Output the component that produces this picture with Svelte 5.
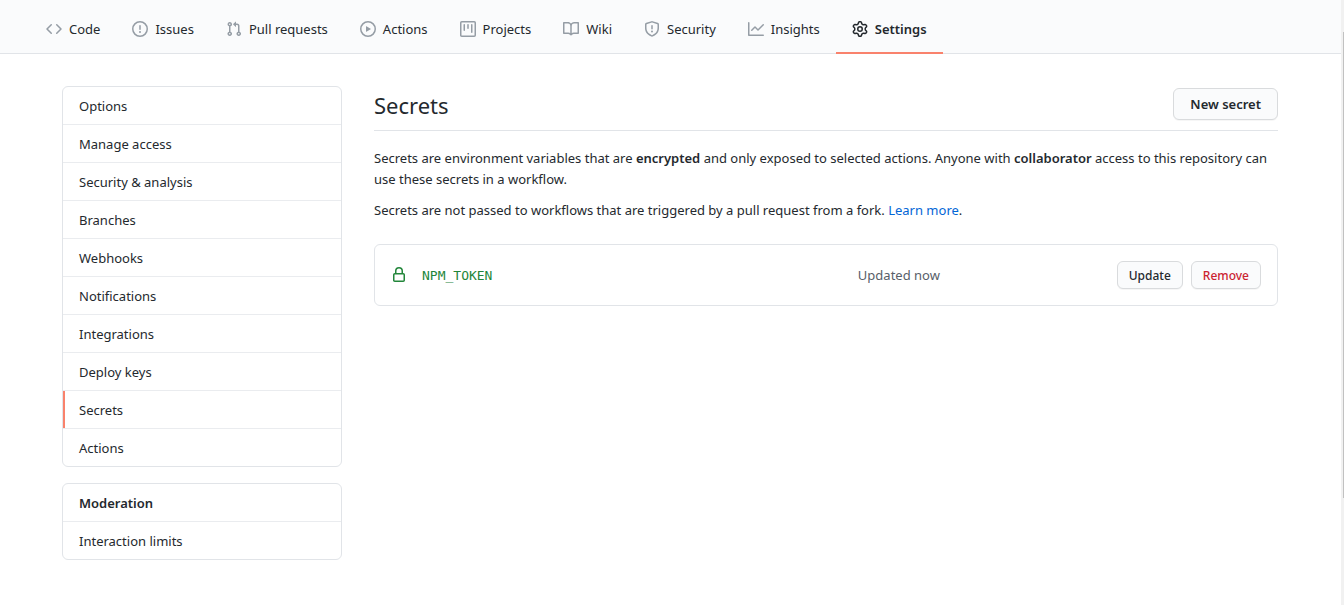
<script>
  const tabs = [
    { label: 'Code', icon: 'M4.72 3.22a.75.75 0 011.06 1.06L2.06 8l3.72 3.72a.75.75 0 11-1.06 1.06L.47 8.53a.75.75 0 010-1.06l4.25-4.25zm6.56 0a.75.75 0 10-1.06 1.06L13.94 8l-3.72 3.72a.75.75 0 101.06 1.06l4.25-4.25a.75.75 0 000-1.06l-4.25-4.25z' },
    { label: 'Issues', icon: 'M8 1.5a6.5 6.5 0 100 13 6.5 6.5 0 000-13zM0 8a8 8 0 1116 0A8 8 0 010 8zm9 3a1 1 0 11-2 0 1 1 0 012 0zm-.25-6.25a.75.75 0 00-1.5 0v3.5a.75.75 0 001.5 0v-3.5z' },
    { label: 'Pull requests', icon: 'M7.177 3.073L9.573.677A.25.25 0 0110 .854v4.792a.25.25 0 01-.427.177L7.177 3.427a.25.25 0 010-.354zM3.75 2.5a.75.75 0 100 1.5.75.75 0 000-1.5zm-2.25.75a2.25 2.25 0 113 2.122v5.256a2.251 2.251 0 11-1.5 0V5.372A2.25 2.25 0 011.5 3.25zM11 2.5h-1V4h1a1 1 0 011 1v5.628a2.251 2.251 0 101.5 0V5A2.5 2.5 0 0011 2.5zm1 10.25a.75.75 0 111.5 0 .75.75 0 01-1.5 0zM3.75 12a.75.75 0 100 1.5.75.75 0 000-1.5z' },
    { label: 'Actions', icon: 'M1.5 8a6.5 6.5 0 1113 0 6.5 6.5 0 01-13 0zM8 0a8 8 0 100 16A8 8 0 008 0zM6.379 5.227A.25.25 0 006 5.442v5.117a.25.25 0 00.379.214l4.264-2.559a.25.25 0 000-.428L6.379 5.227z' },
    { label: 'Projects', icon: 'M1.75 0A1.75 1.75 0 000 1.75v12.5C0 15.216.784 16 1.75 16h12.5A1.75 1.75 0 0016 14.25V1.75A1.75 1.75 0 0014.25 0H1.75zM1.5 1.75a.25.25 0 01.25-.25h12.5a.25.25 0 01.25.25v12.5a.25.25 0 01-.25.25H1.75a.25.25 0 01-.25-.25V1.75zM11.75 3a.75.75 0 00-.75.75v7.5a.75.75 0 001.5 0v-7.5a.75.75 0 00-.75-.75zm-8.25.75a.75.75 0 011.5 0v5.5a.75.75 0 01-1.5 0v-5.5zM8 3a.75.75 0 00-.75.75v3.5a.75.75 0 001.5 0v-3.5A.75.75 0 008 3z' },
    { label: 'Wiki', icon: 'M0 1.75A.75.75 0 01.75 1h4.253c1.227 0 2.317.59 3 1.501A3.744 3.744 0 0111.006 1h4.245a.75.75 0 01.75.75v10.5a.75.75 0 01-.75.75h-4.507a2.25 2.25 0 00-1.591.659l-.622.621a.75.75 0 01-1.06 0l-.622-.621A2.25 2.25 0 005.258 13H.75a.75.75 0 01-.75-.75V1.75zm8.755 3a2.25 2.25 0 012.25-2.25H14.5v9h-3.757c-.71 0-1.4.201-1.992.572l.004-7.322zm-1.504 7.324l.004-5.073-.002-2.253A2.25 2.25 0 005.003 2.5H1.5v9h3.757a3.75 3.75 0 011.994.574z' },
    { label: 'Security', icon: 'M7.467.133a1.75 1.75 0 011.066 0l5.25 1.68A1.75 1.75 0 0115 3.48V7c0 1.566-.32 3.182-1.303 4.682-.983 1.498-2.585 2.813-5.032 3.855a1.7 1.7 0 01-1.33 0c-2.447-1.042-4.049-2.357-5.032-3.855C1.32 10.182 1 8.566 1 7V3.48a1.75 1.75 0 011.217-1.667l5.25-1.68zm.61 1.429a.25.25 0 00-.153 0l-5.25 1.68a.25.25 0 00-.174.238V7c0 1.358.275 2.666 1.057 3.86.784 1.194 2.121 2.34 4.366 3.297a.2.2 0 00.154 0c2.245-.956 3.582-2.104 4.366-3.298C13.225 9.666 13.5 8.36 13.5 7V3.48a.25.25 0 00-.174-.237l-5.25-1.68zM9 10.5a1 1 0 11-2 0 1 1 0 012 0zm-.25-5.75a.75.75 0 10-1.5 0v3a.75.75 0 001.5 0v-3z' },
    { label: 'Insights', icon: 'M1.5 1.75a.75.75 0 00-1.5 0v12.5c0 .414.336.75.75.75h14.5a.75.75 0 000-1.5H1.5V1.75zm14.28 2.53a.75.75 0 00-1.06-1.06L10 7.94 7.53 5.47a.75.75 0 00-1.06 0L3.22 8.72a.75.75 0 001.06 1.06L7 7.06l2.47 2.47a.75.75 0 001.06 0l5.25-5.25z' },
    { label: 'Settings', current: true, icon: 'M7.429 1.525a6.593 6.593 0 011.142 0c.036.003.108.036.137.146l.289 1.105c.147.56.55.967.997 1.189.174.086.341.183.501.29.417.278.97.423 1.53.27l1.102-.303c.11-.03.175.016.195.046.219.31.41.641.573.989.014.031.022.11-.059.19l-.815.806c-.411.406-.562.957-.53 1.456a4.588 4.588 0 010 .582c-.032.499.119 1.05.53 1.456l.815.806c.08.08.073.159.059.19a6.494 6.494 0 01-.573.99c-.02.029-.086.074-.195.045l-1.103-.303c-.559-.153-1.112-.008-1.529.27-.16.107-.327.204-.5.29-.449.222-.851.628-.998 1.189l-.289 1.105c-.029.11-.101.143-.137.146a6.613 6.613 0 01-1.142 0c-.036-.003-.108-.037-.137-.146l-.289-1.105c-.147-.56-.55-.967-.997-1.189a4.502 4.502 0 01-.501-.29c-.417-.278-.97-.423-1.53-.27l-1.102.303c-.11.03-.175-.016-.195-.046a6.492 6.492 0 01-.573-.989c-.014-.031-.022-.11.059-.19l.815-.806c.411-.406.562-.957.53-1.456a4.587 4.587 0 010-.582c.032-.499-.119-1.05-.53-1.456l-.815-.806c-.08-.08-.073-.159-.059-.19a6.44 6.44 0 01.573-.99c.02-.029.086-.075.195-.045l1.103.303c.559.153 1.112.008 1.529-.27.16-.107.327-.204.5-.29.449-.222.851-.628.998-1.189l.289-1.105c.029-.11.101-.143.137-.146zM8 0c-.236 0-.47.01-.701.03-.743.065-1.29.615-1.458 1.261l-.29 1.106c-.017.066-.078.158-.211.224a5.994 5.994 0 00-.668.386c-.123.082-.233.09-.3.071L3.27 2.776c-.644-.177-1.392.02-1.82.63a7.977 7.977 0 00-.704 1.217c-.315.675-.111 1.422.363 1.891l.815.806c.05.048.098.147.088.294a6.084 6.084 0 000 .772c.01.147-.038.246-.088.294l-.815.806c-.474.469-.678 1.216-.363 1.891.2.428.436.835.704 1.218.428.609 1.176.806 1.82.63l1.103-.303c.066-.019.176-.011.299.071.213.143.436.272.668.386.133.066.194.158.212.224l.289 1.106c.169.646.715 1.196 1.458 1.26a8.094 8.094 0 001.402 0c.743-.064 1.29-.614 1.458-1.26l.29-1.106c.017-.066.078-.158.211-.224a5.98 5.98 0 00.668-.386c.123-.082.233-.09.3-.071l1.102.302c.644.177 1.392-.02 1.82-.63.268-.382.505-.789.704-1.217.315-.675.111-1.422-.364-1.891l-.814-.806c-.05-.048-.098-.147-.088-.294a6.1 6.1 0 000-.772c-.01-.147.039-.246.088-.294l.814-.806c.475-.469.679-1.216.364-1.891a7.992 7.992 0 00-.704-1.218c-.428-.609-1.176-.806-1.82-.63l-1.103.303c-.066.019-.176.011-.299-.071a5.991 5.991 0 00-.668-.386c-.133-.066-.194-.158-.212-.224L10.16 1.29C9.99.645 9.444.095 8.701.031A8.094 8.094 0 008 0zm1.5 8a1.5 1.5 0 11-3 0 1.5 1.5 0 013 0zM11 8a3 3 0 11-6 0 3 3 0 016 0z' }
  ];

  const settings = ['Options', 'Manage access', 'Security & analysis', 'Branches', 'Webhooks', 'Notifications', 'Integrations', 'Deploy keys', 'Secrets', 'Actions'];
</script>

<div class="page">
  <nav class="tabs" aria-label="Repository">
    {#each tabs as tab}
      <a class="tab" class:current={tab.current} href="#top" aria-current={tab.current ? 'page' : undefined}>
        <svg viewBox="0 0 16 16" width="16" height="16" aria-hidden="true"><path fill-rule="evenodd" d={tab.icon} /></svg>
        <span>{tab.label}</span>
      </a>
    {/each}
  </nav>

  <div class="container">
    <aside>
      <nav class="menu" aria-label="Settings">
        {#each settings as item}
          <a class="item" class:selected={item === 'Secrets'} href="#top">{item}</a>
        {/each}
      </nav>
      <nav class="menu" aria-labelledby="moderation">
        <h2 class="item" id="moderation">Moderation</h2>
        <a class="item" href="#top">Interaction limits</a>
      </nav>
    </aside>

    <main>
      <header>
        <h1>Secrets</h1>
        <button class="btn">New secret</button>
      </header>
      <p>
        Secrets are environment variables that are <strong>encrypted</strong> and only exposed to selected actions.
        Anyone with <strong>collaborator</strong> access to this repository can use these secrets in a workflow.
      </p>
      <p>
        Secrets are not passed to workflows that are triggered by a pull request from a fork. <a href="#top">Learn more</a>.
      </p>
      <div class="secret">
        <div class="name">
          <svg viewBox="0 0 16 16" width="16" height="16" aria-hidden="true"><path fill-rule="evenodd" d="M4 4v2h-.25A1.75 1.75 0 002 7.75v5.5c0 .966.784 1.75 1.75 1.75h8.5A1.75 1.75 0 0014 13.25v-5.5A1.75 1.75 0 0012.25 6H12V4a4 4 0 10-8 0zm6.5 2V4a2.5 2.5 0 00-5 0v2h5zM12 7.5h.25a.25.25 0 01.25.25v5.5a.25.25 0 01-.25.25h-8.5a.25.25 0 01-.25-.25v-5.5a.25.25 0 01.25-.25H12z" /></svg>
          <code>NPM_TOKEN</code>
        </div>
        <span class="updated">Updated now</span>
        <div class="actions">
          <button class="btn small">Update</button>
          <button class="btn small danger">Remove</button>
        </div>
      </div>
    </main>
  </div>
</div>
<div class="scrollbar" aria-hidden="true"><div class="thumb"></div></div>

<style>
  :global(body) {
    margin: 0;
    background: #fff;
  }

  .page {
    margin-right: 3px;
    color: #24292e;
    font: 13px/21px "Noto Sans", "Open Sans", sans-serif;
  }

  a {
    color: #0366d6;
    text-decoration: none;
  }

  svg {
    flex: none;
    fill: currentColor;
  }

  strong {
    font-weight: 600;
  }

  .tabs {
    display: flex;
    padding: 6px 30px 0;
    background: #fafbfc;
    box-shadow: inset 0 -1px #e1e4e8;
  }

  .tab {
    display: flex;
    align-items: center;
    gap: 7px;
    height: 46px;
    padding: 0 16px;
    border-bottom: 2px solid transparent;
    color: #24292e;
    white-space: nowrap;
  }

  .tab svg {
    color: #959da5;
  }

  .tab.current {
    border-color: #f9826c;
    font-weight: 600;
  }

  .tab.current svg {
    color: #24292e;
  }

  .container {
    display: grid;
    grid-template-columns: 280px minmax(0, 1fr);
    gap: 32px;
    box-sizing: border-box;
    max-width: 1281px;
    margin: 0 auto;
    padding: 32px 33px 32px 32px;
  }

  .menu {
    margin-bottom: 16px;
    overflow: hidden;
    border: 1px solid #e1e4e8;
    border-radius: 6px;
  }

  .item {
    display: block;
    margin: 0;
    padding: 9px 16px 7px;
    border-bottom: 1px solid #eaecef;
    color: #24292e;
    font-size: 13px;
    line-height: 21px;
  }

  h2.item {
    font-weight: 600;
  }

  .item:last-child {
    border-bottom: 0;
  }

  .selected {
    box-shadow: inset 2px 0 #f9826c;
  }

  header {
    display: flex;
    align-items: center;
    justify-content: space-between;
    margin-bottom: 17px;
    padding: 2px 0 10px;
    border-bottom: 1px solid #e1e4e8;
  }

  h1 {
    margin: 0;
    padding-top: 2px;
    font-size: 22px;
    font-weight: 400;
    line-height: 30px;
  }

  p {
    margin: 0 0 10px;
  }

  .btn {
    padding: 5px 16px;
    border: 1px solid #d9dbdd;
    border-radius: 6px;
    background: #fafbfc;
    box-shadow: 0 1px 0 rgba(27, 31, 35, 0.04);
    color: #24292e;
    font: 600 13px/20px "Noto Sans", "Open Sans", sans-serif;
  }

  .small {
    padding: 4px 11px 2px;
    font-size: 12px;
    font-weight: 500;
  }

  .danger {
    color: #cb2431;
  }

  .secret {
    display: grid;
    grid-template-columns: minmax(0, 467fr) minmax(0, 259fr) auto;
    align-items: center;
    margin-top: 23px;
    padding: 16px;
    border: 1px solid #e1e4e8;
    border-radius: 6px;
  }

  .name {
    display: flex;
    align-items: center;
    gap: 15px;
    color: #22863a;
  }

  code {
    font: 13px/21px "DejaVu Sans Mono", monospace;
  }

  .updated {
    color: #586069;
  }

  .actions {
    display: flex;
    gap: 8px;
  }

  .scrollbar {
    position: fixed;
    inset: 0 0 0 auto;
    width: 3px;
    background: #f1f1f1;
  }

  .thumb {
    width: 1px;
    height: 77%;
    margin: 32px 0 0 auto;
    background: #c1c1c1;
  }
</style>
